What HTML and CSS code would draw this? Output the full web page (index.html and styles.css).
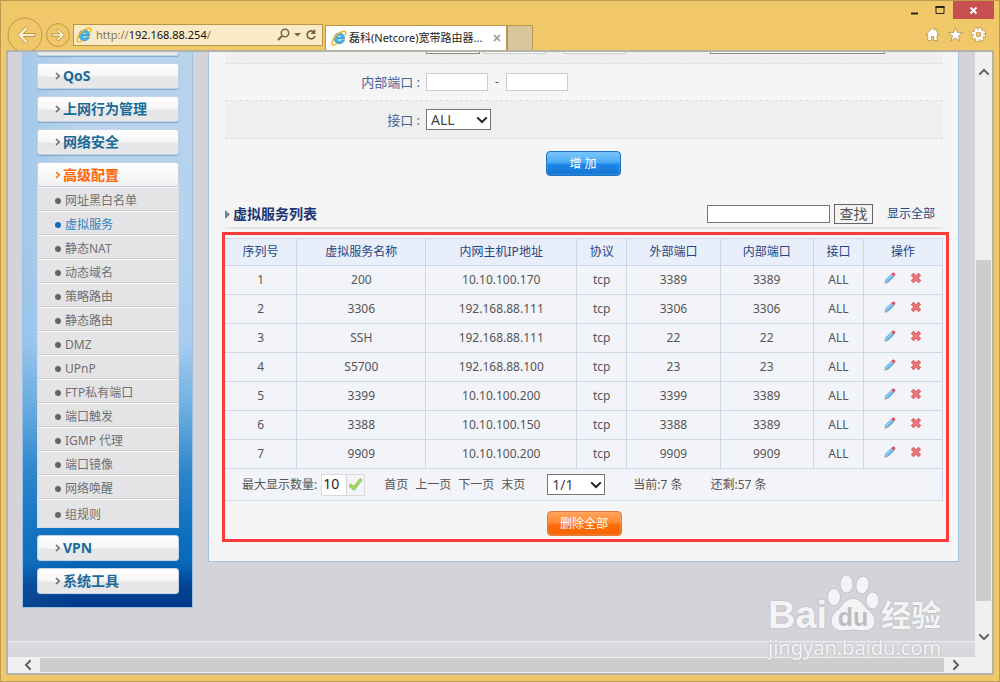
FILE: index.html
```html
<!DOCTYPE html>
<html lang="zh-CN">
<head>
    <meta charset="UTF-8">
    <meta name="viewport" content="width=device-width, initial-scale=1.0">
    <title>磊科(Netcore)宽带路由器</title>
    <link rel="stylesheet" href="styles.css">
</head>
<body>
    <svg class="symbols" aria-hidden="true">
        <symbol id="ie" viewBox="0 0 16 16">
            <path d="M13.6 9H6.2c.2 1.500 1.200 2.200 2.400 2.200.9 0 1.600-.4 2-1h2.800c-.8 2.300-2.600 3.500-5 3.500-3.200 0-5.300-2.200-5.300-5.300C3.100 5.200 5.300 3 8.400 3c3.300 0 5.300 2.300 5.200 6zM6.300 7.200h4.300C10.400 5.900 9.600 5.300 8.500 5.300S6.600 5.900 6.300 7.200z" fill="#45b3e8" stroke="#2382bf" stroke-width=".6"/>
            <path d="M1.800 14.800C-.8 12.800 3.600 5.600 8.600 2.700c3-1.800 6-2.200 6.300-.4.1.9-.3 2-.9 3" fill="none" stroke="#f2b91c" stroke-width="1.500"/>
            <path d="M1.800 14.800c1.200.6 3-.2 4.600-1.500" fill="none" stroke="#f2b91c" stroke-width="1.300"/>
        </symbol>
        <symbol id="pencil" viewBox="0 0 12 12">
            <path d="M1 8l2.800 2.900L.4 11.700z" fill="#a9aaa5"/>
            <path d="M.9 8L7.300 2l2.700 2.900-6.300 6z" fill="#62acdf"/>
            <path d="M2 9l6.300-5.900" stroke="#a5d6f3" stroke-width="1.200"/>
            <path d="M7.200 2.100L8.600.8c1.300-.9 3.300.9 2.500 2.300L9.900 4.800z" fill="#d45464"/>
        </symbol>
        <symbol id="cross" viewBox="0 0 12 12">
            <path d="M3.500 3.500l5 5M8.500 3.500l-5 5" stroke="#cf5a60" stroke-width="3.800" stroke-linecap="square"/>
            <path d="M3.500 3.500l5 5M8.500 3.500l-5 5" stroke="#ee7777" stroke-width="2.400" stroke-linecap="square"/>
        </symbol>
        <symbol id="chevron" viewBox="0 0 12 8">
            <path d="M1.200 1.400L6 6l4.800-4.600" fill="none" stroke="currentColor" stroke-width="2"/>
        </symbol>
        <symbol id="angle" viewBox="0 0 6 8">
            <path d="M1 1l3.200 3L1 7" fill="none" stroke="currentColor" stroke-width="1.500"/>
        </symbol>
    </svg>

    <div class="window">
        <header class="chrome">
            <div class="titlebar">
                <button class="win-btn" aria-label="最小化"><svg width="10" height="10"><path d="M1 8.500h7" stroke="#2b2719" stroke-width="2"/></svg></button>
                <button class="win-btn" aria-label="最大化"><svg width="10" height="10"><path d="M1 2h8v6.500H1z" fill="none" stroke="#2b2719"/><path d="M.5 2h9" stroke="#2b2719" stroke-width="2"/></svg></button>
                <button class="win-btn win-close" aria-label="关闭"><svg width="9" height="9"><path d="M1.500 1.500l6 6M7.500 1.500l-6 6" stroke="#fff" stroke-width="1.800"/></svg></button>
            </div>
            <div class="toolbar">
                <button class="nav-btn" aria-label="后退">
                    <svg width="36" height="36" viewBox="0 0 36 36"><circle cx="18" cy="18" r="17" fill="none" stroke="#bc9648"/><path d="M19 9.500L10.500 18l8.500 8.500 2-2.200-4.800-4.800H28v-3H16.200L21 11.700z" fill="#fdf0cf" stroke="#a9853d" stroke-width=".8"/></svg>
                </button>
                <button class="nav-btn" aria-label="前进">
                    <svg width="24" height="24" viewBox="0 0 24 24"><circle cx="12" cy="12" r="11.400" fill="none" stroke="#bc9648"/><path d="M12 6l6.500 6-6.500 6-1.600-1.700 3.200-3.100H5.500v-2.400h8.100l-3.200-3.100z" fill="#fdf0cf" stroke="#a9853d" stroke-width=".8"/></svg>
                </button>
                <form class="address">
                    <svg class="icon-ie"><use href="#ie"/></svg>
                    <span class="url">http://<b>192.168.88.254</b>/</span>
                    <button type="button" aria-label="搜索"><svg width="13" height="13"><circle cx="8" cy="5" r="3.700" fill="none" stroke="#75643f" stroke-width="1.500"/><path d="M5 8l-4 4" stroke="#75643f" stroke-width="2"/></svg></button>
                    <button type="button" aria-label="下拉"><svg width="7" height="5"><path d="M0 1h7L3.500 4.500z" fill="#75643f"/></svg></button>
                    <button type="button" aria-label="刷新"><svg width="12" height="12"><path d="M9.200 3.200A4 4 0 1 0 10 7" fill="none" stroke="#75643f" stroke-width="1.700"/><path d="M10.300 0v5H5.500z" fill="#75643f"/></svg></button>
                </form>
                <div class="tab">
                    <svg class="icon-ie"><use href="#ie"/></svg>
                    <span class="tab-title">磊科(Netcore)宽带路由器...</span>
                    <button aria-label="关闭标签页"><svg width="8" height="8"><path d="M1 1l6 6M7 1L1 7" stroke="#999" stroke-width="1.700"/></svg></button>
                </div>
                <button class="new-tab" aria-label="新标签页"></button>
                <div class="tools">
                    <button aria-label="主页"><svg width="15" height="15"><path d="M7.500 1L.8 7.600h2v6h3.500V9.500h2.400v4.100h3.500v-6h2L12 5.300V2h-2v1.400z" fill="#fff" stroke="#a9853d" stroke-width=".7"/></svg></button>
                    <button aria-label="收藏夹"><svg width="15" height="15"><path d="M7.500.6l1.900 4.800 5.100.2-4 3.300 1.400 5-4.400-2.900-4.400 2.900 1.400-5-4-3.300 5.100-.2z" fill="#fff" stroke="#a9853d" stroke-width=".7"/></svg></button>
                    <button aria-label="工具"><svg width="15" height="15"><circle cx="7.500" cy="7.500" r="6" fill="none" stroke="#a9853d" stroke-width="3" stroke-dasharray="2.900 1.810"/><circle cx="7.500" cy="7.500" r="4" fill="none" stroke="#a9853d" stroke-width="3.600"/><circle cx="7.500" cy="7.500" r="5.900" fill="none" stroke="#fff" stroke-width="2" stroke-dasharray="2.320 2.320"/><circle cx="7.500" cy="7.500" r="4" fill="none" stroke="#fff" stroke-width="2.500"/></svg></button>
                </div>
            </div>
        </header>

        <div class="frame">
            <div class="page">
                <div class="columns">
                    <nav class="sidebar">
                        <a class="menu menu-cut" href="#" aria-label="菜单"></a>
                        <a class="menu" href="#"><svg><use href="#angle"/></svg>QoS</a>
                        <a class="menu" href="#"><svg><use href="#angle"/></svg>上网行为管理</a>
                        <a class="menu" href="#"><svg><use href="#angle"/></svg>网络安全</a>
                        <div class="menu-group">
                            <a class="menu open" href="#"><svg><use href="#angle"/></svg>高级配置</a>
                            <ul class="submenu">
                                <li><a href="#">网址黑白名单</a></li>
                                <li><a class="active" href="#">虚拟服务</a></li>
                                <li><a href="#">静态NAT</a></li>
                                <li><a href="#">动态域名</a></li>
                                <li><a href="#">策略路由</a></li>
                                <li><a href="#">静态路由</a></li>
                                <li><a href="#">DMZ</a></li>
                                <li><a href="#">UPnP</a></li>
                                <li><a href="#">FTP私有端口</a></li>
                                <li><a href="#">端口触发</a></li>
                                <li><a href="#">IGMP 代理</a></li>
                                <li><a href="#">端口镜像</a></li>
                                <li><a href="#">网络唤醒</a></li>
                                <li><a href="#">组规则</a></li>
                            </ul>
                        </div>
                        <a class="menu" href="#"><svg><use href="#angle"/></svg>VPN</a>
                        <a class="menu" href="#"><svg><use href="#angle"/></svg>系统工具</a>
                    </nav>

                    <main class="panel">
                        <form class="service-form">
                            <div class="row row-cut shaded">
                                <span></span>
                                <div class="fields">
                                    <select class="cut-protocol" aria-label="协议"></select>
                                    <input class="port" type="text" aria-label="外部起始端口">
                                    <input class="port cut-end" type="text" aria-label="外部结束端口">
                                    <select class="cut-common" aria-label="常用服务"></select>
                                </div>
                            </div>
                            <div class="row">
                                <label for="inner-port">内部端口 :</label>
                                <div class="fields">
                                    <input class="port" id="inner-port" type="text">
                                    <span class="dash">-</span>
                                    <input class="port" type="text" aria-label="内部结束端口">
                                </div>
                            </div>
                            <div class="row shaded">
                                <label for="iface">接口 :</label>
                                <div class="fields">
                                    <span class="select select-iface">
                                        <select id="iface"><option>ALL</option></select>
                                        <svg><use href="#chevron"/></svg>
                                    </span>
                                </div>
                            </div>
                            <div class="actions">
                                <button class="btn btn-blue" type="button">增 加</button>
                            </div>
                        </form>

                        <div class="list-head">
                            <h2><svg width="5" height="9"><path d="M0 0l5 4.500L0 9z" fill="#6f8496"/></svg>虚拟服务列表</h2>
                            <input class="search" type="text" aria-label="查找内容">
                            <button class="find" type="button">查找</button>
                            <a class="show-all" href="#">显示全部</a>
                        </div>

                        <section class="list-box">
                            <table>
                                <colgroup>
                                    <col class="c-id"><col class="c-name"><col class="c-ip"><col class="c-proto">
                                    <col class="c-port"><col class="c-port"><col class="c-if"><col class="c-op">
                                </colgroup>
                                <thead>
                                    <tr><th>序列号</th><th>虚拟服务名称</th><th>内网主机IP地址</th><th>协议</th><th>外部端口</th><th>内部端口</th><th>接口</th><th>操作</th></tr>
                                </thead>
                                <tbody>
                                    <tr><td>1</td><td>200</td><td>10.10.100.170</td><td>tcp</td><td>3389</td><td>3389</td><td>ALL</td><td class="ops"><button aria-label="编辑"><svg><use href="#pencil"/></svg></button><button aria-label="删除"><svg><use href="#cross"/></svg></button></td></tr>
                                    <tr><td>2</td><td>3306</td><td>192.168.88.111</td><td>tcp</td><td>3306</td><td>3306</td><td>ALL</td><td class="ops"><button aria-label="编辑"><svg><use href="#pencil"/></svg></button><button aria-label="删除"><svg><use href="#cross"/></svg></button></td></tr>
                                    <tr><td>3</td><td>SSH</td><td>192.168.88.111</td><td>tcp</td><td>22</td><td>22</td><td>ALL</td><td class="ops"><button aria-label="编辑"><svg><use href="#pencil"/></svg></button><button aria-label="删除"><svg><use href="#cross"/></svg></button></td></tr>
                                    <tr><td>4</td><td>S5700</td><td>192.168.88.100</td><td>tcp</td><td>23</td><td>23</td><td>ALL</td><td class="ops"><button aria-label="编辑"><svg><use href="#pencil"/></svg></button><button aria-label="删除"><svg><use href="#cross"/></svg></button></td></tr>
                                    <tr><td>5</td><td>3399</td><td>10.10.100.200</td><td>tcp</td><td>3399</td><td>3389</td><td>ALL</td><td class="ops"><button aria-label="编辑"><svg><use href="#pencil"/></svg></button><button aria-label="删除"><svg><use href="#cross"/></svg></button></td></tr>
                                    <tr><td>6</td><td>3388</td><td>10.10.100.150</td><td>tcp</td><td>3388</td><td>3389</td><td>ALL</td><td class="ops"><button aria-label="编辑"><svg><use href="#pencil"/></svg></button><button aria-label="删除"><svg><use href="#cross"/></svg></button></td></tr>
                                    <tr><td>7</td><td>9909</td><td>10.10.100.200</td><td>tcp</td><td>9909</td><td>9909</td><td>ALL</td><td class="ops"><button aria-label="编辑"><svg><use href="#pencil"/></svg></button><button aria-label="删除"><svg><use href="#cross"/></svg></button></td></tr>
                                </tbody>
                            </table>
                            <div class="pager">
                                <label for="page-size">最大显示数量:</label>
                                <span class="page-size">
                                    <input id="page-size" type="text" value="10">
                                    <button aria-label="确定"><svg width="15" height="15"><path d="M1 9l2.200-2.200 2.600 2.700L12 1.500 14 3 6.200 13.500z" fill="#a4dc62" stroke="#80b455" stroke-width=".8"/></svg></button>
                                </span>
                                <span class="page-links">
                                    <a href="#">首页</a>
                                    <a href="#">上一页</a>
                                    <a href="#">下一页</a>
                                    <a href="#">末页</a>
                                </span>
                                <span class="select select-page">
                                    <select aria-label="页码"><option>1/1</option></select>
                                    <svg><use href="#chevron"/></svg>
                                </span>
                                <span class="count">当前:7 条</span>
                                <span class="count">还剩:57 条</span>
                            </div>
                            <div class="delete-all">
                                <button class="btn btn-orange">删除全部</button>
                            </div>
                        </section>
                    </main>
                </div>
                <footer class="page-foot"></footer>
            </div>

            <div class="vscroll">
                <button aria-label="向上滚动"><svg class="up"><use href="#chevron"/></svg></button>
                <div class="thumb"></div>
                <button aria-label="向下滚动"><svg><use href="#chevron"/></svg></button>
            </div>
            <div class="hscroll">
                <button aria-label="向左滚动"><svg class="left"><use href="#chevron"/></svg></button>
                <div class="thumb"></div>
                <button aria-label="向右滚动"><svg class="right"><use href="#chevron"/></svg></button>
            </div>

            <div class="watermark">
                <div class="brand">
                    <span class="bai">Bai</span>
                    <svg width="54" height="60" viewBox="0 0 54 60">
                        <g fill="#f4f4f6" stroke="#c3c3c8">
                            <ellipse cx="7" cy="25" rx="6.500" ry="8.500"/>
                            <ellipse cx="19.500" cy="12" rx="6.500" ry="9"/>
                            <ellipse cx="35.500" cy="13" rx="6.500" ry="9" transform="rotate(10 35.500 13)"/>
                            <ellipse cx="45.500" cy="28.500" rx="6.500" ry="8.500"/>
                            <path d="M26 26.500c6 0 9 4 12 8s10 7 10 14.500c0 7-6 10-11 10-4 0-7-1-11-1s-7 1-11 1C9 59 4 55 4 49c0-7.500 7-10.500 10-14.500s6-8 12-8z"/>
                        </g>
                        <text x="26" y="54" text-anchor="middle">du</text>
                    </svg>
                    <span class="jingyan">经验</span>
                </div>
                <div class="site">jingyan.baidu.com</div>
            </div>
        </div>
    </div>
</body>
</html>
```
FILE: styles.css
```css
* {
    box-sizing: border-box;
}
body {
    margin: 0;
    font-family: "Noto Sans", "Noto Sans CJK SC", sans-serif;
    font-size: 12px;
    line-height: 16px;
    color: #555;
}
button,
input,
select {
    font: inherit;
    color: inherit;
    margin: 0;
    border-radius: 0;
}
button {
    padding: 0;
    border: 0;
    background: none;
    cursor: pointer;
}
a {
    color: inherit;
    text-decoration: none;
}
svg {
    display: block;
    flex: none;
}
.symbols {
    position: absolute;
    width: 0;
    height: 0;
}

/* browser window */
.window {
    display: flex;
    flex-direction: column;
    height: 100vh;
    min-height: 600px;
    border: 1px solid #bc9a50;
    background: #f0c869;
    padding: 0 5px 6px;
    overflow: hidden;
}
.titlebar {
    display: flex;
    justify-content: flex-end;
    height: 18px;
}
.win-btn {
    display: flex;
    align-items: center;
    justify-content: center;
    width: 25px;
}
.win-close {
    width: 41px;
    margin-left: 1px;
    background: #c75050;
}
.toolbar {
    display: flex;
    align-items: center;
    height: 31px;
    padding-left: 1px;
}
.nav-btn {
    margin-right: 3px;
}
.address {
    display: flex;
    align-items: center;
    gap: 4px;
    flex: 0 1 250px;
    height: 22px;
    padding: 0 5px 0 2px;
    border: 1px solid #bc9648;
    background: #faeac6;
    color: #84775d;
}
.url {
    flex: 1;
    white-space: nowrap;
    font-size: 11px;
}
.url b {
    font-weight: 400;
    color: #111;
}
.icon-ie {
    width: 16px;
    height: 16px;
}
.tab {
    display: flex;
    align-items: center;
    gap: 2px;
    align-self: flex-end;
    flex: 0 1 182px;
    height: 25px;
    margin-left: 2px;
    padding: 0 5px;
    border: 1px solid #bc9648;
    border-bottom: 0;
    background: #fff;
    color: #222;
}
.tab-title {
    flex: 1;
    white-space: nowrap;
    font-size: 11px;
}
.new-tab {
    align-self: flex-end;
    width: 26px;
    height: 25px;
    border: 1px solid #bc9648;
    border-bottom: 0;
    background: #d8c59c;
}
.tools {
    display: flex;
    gap: 8px;
    margin-left: auto;
    padding-right: 8px;
}
.frame {
    position: relative;
    flex: 1;
    min-height: 0;
    display: grid;
    grid-template: 1fr 16px / 1fr 17px;
    border: 2px solid #b5b3a8;
    background: #f0f0f0;
}

/* scrollbars */
.vscroll,
.hscroll {
    display: flex;
    color: #606060;
}
.vscroll {
    flex-direction: column;
    padding: 12px 1px;
}
.vscroll button,
.hscroll button {
    display: flex;
    align-items: center;
    justify-content: center;
    flex: none;
}
.vscroll button {
    height: 16px;
}
.vscroll .thumb {
    flex: 1;
    margin: 180px 0 28px;
    background: #cdcdcd;
}
.hscroll {
    padding: 1px 9px 1px 10px;
}
.hscroll button {
    width: 20px;
}
.hscroll .thumb {
    flex: 1;
    margin: 0 2px;
    background: #cdcdcd;
}
.vscroll svg,
.hscroll svg {
    width: 12px;
    height: 8px;
}
.up {
    transform: rotate(180deg);
}
.left {
    transform: rotate(90deg);
}
.right {
    transform: rotate(-90deg);
}

/* page */
.page {
    display: flex;
    flex-direction: column;
    overflow: hidden;
    background: #d4d3d9;
}
.columns {
    flex: 1;
    display: flex;
    align-items: flex-start;
    gap: 15px;
    padding: 0 16px 0 14px;
}
.page-foot {
    height: 16px;
    border-top: 1px solid #eeeef0;
    background: linear-gradient(#dcdce0, #d5d5da);
}

/* sidebar */
.sidebar {
    display: flex;
    flex-direction: column;
    gap: 7px;
    flex: none;
    width: 171px;
    padding: 0 13px 13px 14px;
    border: 1px solid #9dc0e4;
    border-top: 0;
    background:
        linear-gradient(90deg, rgba(60, 140, 205, 0.15), transparent 30%),
        linear-gradient(#b8d3ec, #b5d3ee 32%, #a8cdf1 52%, #6db0e2 64%, #2c85cb 76%, #0f71c1 86%, #0769ba 92%, #024395 96%, #003a88);
}
.menu {
    display: flex;
    align-items: center;
    gap: 2px;
    height: 26px;
    padding-left: 17px;
    border: 1px solid #c3d3e3;
    border-radius: 3px;
    background: linear-gradient(#fff, #f6f6f6 50%, #e5e5e8 55%, #e8e8ea);
    box-shadow: 0 1px 1px rgba(60, 100, 150, 0.4);
    font-size: 14px;
    font-weight: 700;
    color: #1a6a97;
}
.menu svg {
    width: 6px;
    height: 8px;
    color: #666;
}
.menu-cut {
    height: 4px;
    border-top: 0;
    border-radius: 0 0 3px 3px;
    background: #e8e8ea;
}
.menu.open {
    height: 25px;
    border-radius: 3px 3px 0 0;
    background: linear-gradient(#fff, #f0f0f0);
    box-shadow: none;
    color: #f60;
}
.menu.open svg {
    color: #f60;
}
.submenu {
    margin: 0;
    padding: 0;
    list-style: none;
    background: #e4e4e6;
    border: 1px solid #d5dde6;
    border-top: 0;
}
.submenu a {
    display: flex;
    align-items: center;
    gap: 4px;
    height: 24px;
    padding: 3px 0 0 17px;
    border-top: 1px solid #f5f5f5;
    border-bottom: 1px solid #cbcbcd;
    color: #707070;
}
.submenu a::before {
    content: "";
    width: 6px;
    height: 6px;
    border-radius: 50%;
    background: #666;
}
.submenu .active {
    color: #2b83c0;
}
.submenu .active::before {
    background: #0f6cb8;
}
.submenu li:last-child a {
    height: 28px;
    border-bottom: 0;
}

/* main panel */
.panel {
    flex: 1;
    min-width: 0;
    padding: 0 15px 19px 16px;
    border: 1px solid #a6c0dd;
    border-top: 0;
    background: #f5f5f5;
}
.row {
    display: grid;
    grid-template-columns: 200px 1fr;
    align-items: center;
    height: 37px;
    border-bottom: 1px dashed #dedede;
}
.row label {
    padding-right: 5px;
    text-align: right;
    font-size: 13px;
    color: #466298;
}
.shaded {
    height: 38px;
    background: #efefef;
}
.row-cut {
    height: 12px;
    align-items: end;
    padding-bottom: 9px;
    overflow: hidden;
}
.row-cut .fields {
    height: 2px;
    align-items: flex-end;
}
.fields {
    display: flex;
    align-items: center;
    padding-left: 1px;
}
.port {
    width: 62px;
    height: 18px;
    border: 1px solid #ccc;
    background: #fff;
    padding: 0 3px;
}
.cut-protocol,
.cut-common {
    appearance: none;
    width: 54px;
    height: 18px;
    margin-right: 4px;
    border: 1px solid #888;
    background: #fff;
}
.cut-end {
    margin-left: 18px;
}
.cut-common {
    width: 175px;
    margin: 0 58px 0 auto;
}
.dash {
    width: 18px;
    text-align: center;
}
.select {
    position: relative;
    display: block;
}
.select select {
    appearance: none;
    width: 100%;
    height: 21px;
    padding: 0 4px;
    border: 1px solid #777;
    background: #fff;
    font-size: 14px;
    line-height: 18px;
    color: #444;
}
.select svg {
    position: absolute;
    top: 7px;
    right: 3px;
    width: 12px;
    height: 8px;
    color: #222;
    pointer-events: none;
}
.select-iface {
    width: 65px;
}
.actions {
    display: flex;
    justify-content: center;
    padding: 12px 2px 12px 0;
}
.btn {
    width: 75px;
    height: 25px;
    border-radius: 4px;
    color: #fff;
}
.btn-blue {
    border: 1px solid #1a73c4;
    background: linear-gradient(#7cc8fb, #4aa9f3 45%, #1d86e6 55%, #1674d0);
    box-shadow: inset 0 0 2px #5cb7f5;
}
.btn-orange {
    border: 1px solid #e07c38;
    background: linear-gradient(#ffa55e, #ff8a35 45%, #ff6c0a 55%, #f56200);
    box-shadow: inset 0 0 2px #ffb070;
}

/* service list */
.list-head {
    display: flex;
    align-items: center;
    height: 41px;
    padding: 13px 8px 0 0;
    border-bottom: 2px solid #dce6e9;
}
.list-head h2 {
    display: flex;
    align-items: center;
    gap: 3px;
    flex: 1;
    margin: 0;
    font-size: 14px;
    line-height: 20px;
    color: #1c3574;
}
.search {
    width: 123px;
    height: 18px;
    border: 1px solid #777;
    background: #fff;
}
.find {
    width: 39px;
    height: 20px;
    margin: 0 14px 0 4px;
    border: 1px solid #666;
    background: #f3f3f3;
    font-size: 14px;
    line-height: 18px;
}
.show-all {
    color: #25457f;
}
.list-box {
    margin: 3px -6px 0 -3px;
    padding: 3px 3px 3px 0;
    border: 3px solid #fb3a3c;
}
table {
    width: 100%;
    table-layout: fixed;
    border-collapse: collapse;
    background: #f3f4f9;
}
.c-id { width: 10%; }
.c-name { width: 18%; }
.c-ip { width: 21%; }
.c-proto { width: 7%; }
.c-port { width: 13%; }
.c-if { width: 7%; }
.c-op { width: 11%; }
th,
td {
    height: 29px;
    padding: 0;
    border: 1px solid #ccd8e6;
    text-align: center;
}
th:first-child,
td:first-child {
    border-left: 0;
}
th {
    height: 27px;
    background: #e8effa;
    font-weight: 400;
    color: #25457f;
}
.ops {
    padding-bottom: 6px;
}
.ops svg {
    width: 12px;
    height: 12px;
}
.ops button {
    margin: 0 7px;
    vertical-align: middle;
}
.pager {
    display: flex;
    align-items: center;
    height: 32px;
    padding-left: 17px;
    border: 1px solid #ccd8ea;
    border-width: 0 1px 1px 0;
    background: #f3f4f9;
    white-space: nowrap;
}
.page-size {
    display: flex;
    width: 44px;
    height: 22px;
    margin: 0 19px 0 4px;
    border: 1px solid #d8d8da;
}
.page-size input {
    width: 24px;
    padding: 0 0 2px 1px;
    border: 0;
    background: #fff;
    font-size: 14px;
    color: #222;
}
.page-size button {
    display: flex;
    align-items: center;
    justify-content: center;
    flex: 1;
    border-left: 1px solid #d8d8da;
}
.page-links {
    display: flex;
    gap: 7px;
}
.select-page {
    width: 58px;
    margin-left: 22px;
}
.count {
    margin-left: 28px;
}
.delete-all {
    display: flex;
    justify-content: center;
    padding-top: 10px;
}

/* watermark over the page corner */
.watermark {
    position: absolute;
    right: 46px;
    bottom: 12px;
    width: 178px;
    color: #f4f4f6;
    text-shadow: 0 0 2px #aaa;
    pointer-events: none;
}
.brand {
    display: flex;
    align-items: flex-end;
    height: 60px;
    margin-bottom: 3px;
}
.bai {
    font: 700 38px/34px "Liberation Sans", sans-serif;
}
.brand text {
    font: 700 25px "Liberation Sans", sans-serif;
    fill: #bcbcc2;
    text-shadow: none;
}
.jingyan {
    font-size: 30px;
    line-height: 34px;
    font-weight: 700;
}
.site {
    font-size: 20px;
    line-height: 26px;
}
```
